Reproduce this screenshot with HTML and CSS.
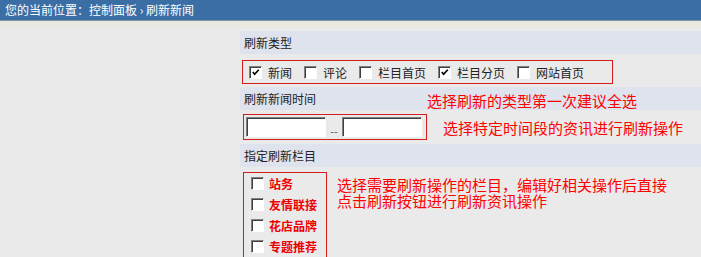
FILE: index.html
```html
<!DOCTYPE html>
<html lang="zh-CN">

<head>
    <meta charset="UTF-8">
    <meta name="viewport" content="width=device-width, initial-scale=1.0">
    <title>刷新新闻</title>
    <link rel="stylesheet" href="styles.css">
</head>

<body>
    <div class="topbar">您的当前位置：控制面板 › 刷新新闻</div>
    <div class="strip"></div>
    <div class="main">
        <div class="form">
            <div class="band band-first">刷新类型</div>
            <div class="row row-types">
                <div class="redbox types">
                    <span class="cb checked"><svg width="11" height="11" viewBox="0 0 11 11"><polyline points="2,5 4,7.5 8.5,2.5" fill="none" stroke="#000" stroke-width="1.8"/></svg></span><span class="lbl">新闻</span>
                    <span class="cb"></span><span class="lbl">评论</span>
                    <span class="cb"></span><span class="lbl">栏目首页</span>
                    <span class="cb checked"><svg width="11" height="11" viewBox="0 0 11 11"><polyline points="2,5 4,7.5 8.5,2.5" fill="none" stroke="#000" stroke-width="1.8"/></svg></span><span class="lbl">栏目分页</span>
                    <span class="cb"></span><span class="lbl">网站首页</span>
                </div>
            </div>

            <div class="band band-time">
                <span class="band-label">刷新新闻时间</span>
                <span class="note note-type">选择刷新的类型第一次建议全选</span>
            </div>
            <div class="row row-time">
                <div class="redbox dates">
                    <input class="date" type="text">
                    <span class="sep">--</span>
                    <input class="date" type="text">
                </div>
                <span class="note note-time">选择特定时间段的资讯进行刷新操作</span>
            </div>

            <div class="band">指定刷新栏目</div>
            <div class="row row-cols">
                <div class="redbox columns">
                    <div class="col-item"><span class="cb"></span><span class="col-name">站务</span></div>
                    <div class="col-item"><span class="cb"></span><span class="col-name">友情联接</span></div>
                    <div class="col-item"><span class="cb"></span><span class="col-name">花店品牌</span></div>
                    <div class="col-item"><span class="cb"></span><span class="col-name">专题推荐</span></div>
                </div>
                <span class="note note-cols">选择需要刷新操作的栏目，编辑好相关操作后直接<br>点击刷新按钮进行刷新资讯操作</span>
            </div>
        </div>
    </div>
</body>

</html>
```

FILE: styles.css
```css
* {
    margin: 0;
    padding: 0;
    box-sizing: border-box;
}

body {
    background-color: #eaeaea;
    font-family: "Noto Sans CJK SC", "Liberation Sans", sans-serif;
    font-size: 12px;
    color: #222;
    overflow: hidden;
}

.topbar {
    height: 21px;
    line-height: 20px;
    padding-left: 5px;
    background-color: #3a6ea5;
    border-bottom: 1px solid #7f93a9;
    color: #fff;
}

.strip {
    height: 7px;
    background-color: #e9e9e1;
}

.main {
    padding-top: 3px;
}

.form {
    margin-left: 240px;
}

.band {
    height: 23px;
    line-height: 23px;
    padding-left: 4px;
    background-color: #dee3ee;
}

.band-time {
    display: flex;
    align-items: center;
}

.band-label {
    width: 183px;
}

.row {
    display: flex;
    align-items: center;
}

.row-types {
    padding: 6px 0 3px 2px;
}

.row-time {
    padding: 4px 0 4px 3px;
}

.row-cols {
    padding: 5px 0 0 3px;
    align-items: flex-start;
}

.redbox {
    border: 1px solid #d41c1c;
}

.types {
    width: 371px;
    height: 24px;
    display: flex;
    align-items: center;
    padding-left: 6px;
}

.cb {
    width: 13px;
    height: 13px;
    flex: none;
    display: inline-flex;
    align-items: center;
    justify-content: center;
    background-color: #fff;
    border: 1px solid;
    border-color: #808080 #fff #fff #808080;
    box-shadow: inset 1px 1px 0 #404040;
}

.cb svg {
    margin: 1px 0 0 1px;
}

.lbl {
    margin-left: 6px;
    margin-right: 12px;
}

.dates {
    width: 184px;
    height: 26px;
    display: flex;
    align-items: center;
    padding-left: 2px;
}

.date {
    width: 80px;
    height: 20px;
    background-color: #fff;
    border: 1px solid;
    border-color: #808080 #fff #fff #808080;
    box-shadow: inset 1px 1px 0 #404040;
    outline: none;
}

.sep {
    width: 16px;
    text-align: center;
    color: #555;
    font-size: 11px;
    padding-top: 7px;
}

.note {
    color: #f00;
    font-size: 15px;
    line-height: 15px;
}

.note-type {
    padding-top: 4px;
}

.note-time {
    margin-left: 16px;
}

.note-cols {
    margin: 5px 0 0 10px;
    line-height: 16px;
}

.columns {
    width: 84px;
    padding-left: 7px;
}

.col-item {
    height: 21px;
    display: flex;
    align-items: center;
}

.col-name {
    margin-left: 5px;
    color: #e00;
    font-weight: bold;
}
```
